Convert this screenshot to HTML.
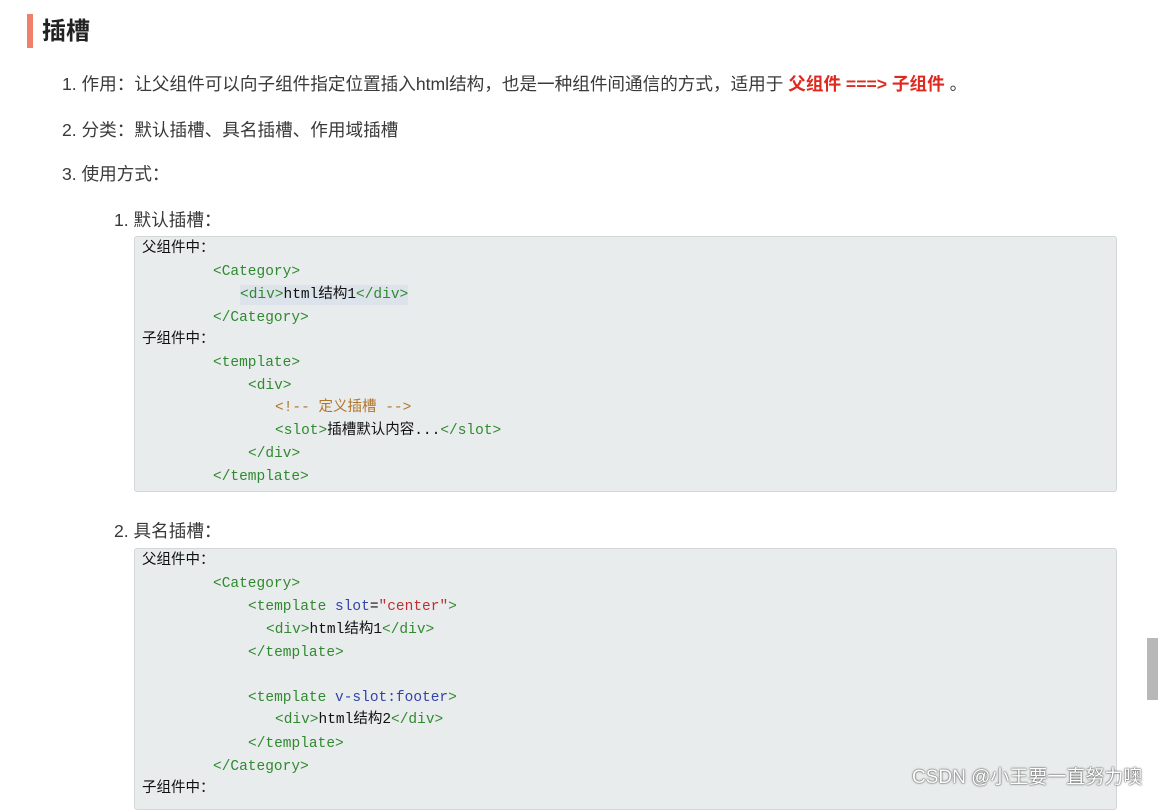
<!DOCTYPE html>
<html><head><meta charset="utf-8"><style>
body{margin:0;width:1158px;height:797px;overflow:hidden;background:#fff;position:relative;font-family:"Liberation Sans","Noto Sans CJK SC",sans-serif;color:#3a3a3a}
.a{position:absolute;white-space:pre}
.t{font-size:17.6px;line-height:20px}
.code{position:absolute;left:134px;width:981px;background:#e9ecec;border:1px solid #d4d7d7;border-radius:3px}
.c{position:absolute;white-space:pre;font-family:"Liberation Mono","Noto Sans CJK SC",monospace;font-size:14.5px;line-height:20px;color:#111}
.g{color:#2f8a2f}.o{color:#b0762c}.b{color:#3344aa}.r{color:#c03030}
</style></head><body>
<div class="a" style="left:27px;top:14px;width:6px;height:34px;background:#f0806c"></div>
<div class="a" style="left:42px;top:16px;font-size:24px;font-weight:bold;color:#222;line-height:32px">插槽</div>
<div class="a t" style="left:62px;top:74px">1. 作用：让父组件可以向子组件指定位置插入html结构，也是一种组件间通信的方式，适用于 <b style="color:#e0281e">父组件 ===&gt; 子组件</b> 。</div>
<div class="a t" style="left:62px;top:120px">2. 分类：默认插槽、具名插槽、作用域插槽</div>
<div class="a t" style="left:62px;top:164px">3. 使用方式：</div>
<div class="a t" style="left:114px;top:210px">1. 默认插槽：</div>
<div class="code" style="top:236px;height:254px"></div>
<div class="c" style="left:142px;top:239px">父组件中：</div>
<div class="c g" style="left:213px;top:262px">&lt;Category&gt;</div>
<div class="c" style="left:240px;top:285px;background:#dde3ea"><span class="g">&lt;div&gt;</span>html结构1<span class="g">&lt;/div&gt;</span></div>
<div class="c g" style="left:213px;top:308px">&lt;/Category&gt;</div>
<div class="c" style="left:142px;top:330px">子组件中：</div>
<div class="c g" style="left:213px;top:353px">&lt;template&gt;</div>
<div class="c g" style="left:248px;top:376px">&lt;div&gt;</div>
<div class="c o" style="left:275px;top:398px">&lt;!-- 定义插槽 --&gt;</div>
<div class="c" style="left:275px;top:421px"><span class="g">&lt;slot&gt;</span>插槽默认内容...<span class="g">&lt;/slot&gt;</span></div>
<div class="c g" style="left:248px;top:444px">&lt;/div&gt;</div>
<div class="c g" style="left:213px;top:467px">&lt;/template&gt;</div>
<div class="a t" style="left:114px;top:521px">2. 具名插槽：</div>
<div class="code" style="top:548px;height:260px"></div>
<div class="c" style="left:142px;top:551px">父组件中：</div>
<div class="c g" style="left:213px;top:574px">&lt;Category&gt;</div>
<div class="c" style="left:248px;top:597px"><span class="g">&lt;template </span><span class="b">slot</span>=<span class="r">"center"</span><span class="g">&gt;</span></div>
<div class="c" style="left:266px;top:620px"><span class="g">&lt;div&gt;</span>html结构1<span class="g">&lt;/div&gt;</span></div>
<div class="c g" style="left:248px;top:643px">&lt;/template&gt;</div>
<div class="c" style="left:248px;top:688px"><span class="g">&lt;template </span><span class="b">v-slot:footer</span><span class="g">&gt;</span></div>
<div class="c" style="left:275px;top:710px"><span class="g">&lt;div&gt;</span>html结构2<span class="g">&lt;/div&gt;</span></div>
<div class="c g" style="left:248px;top:734px">&lt;/template&gt;</div>
<div class="c g" style="left:213px;top:757px">&lt;/Category&gt;</div>
<div class="c" style="left:142px;top:779px">子组件中：</div>
<div class="a" style="left:1147px;top:638px;width:11px;height:62px;background:#b8b8b8"></div>
<div class="a" style="left:912px;top:762px;font-size:19px;color:#fff;text-shadow:0 0 2px #555,0 0 1px #333">CSDN @小王要一直努力噢</div>
</body></html>
